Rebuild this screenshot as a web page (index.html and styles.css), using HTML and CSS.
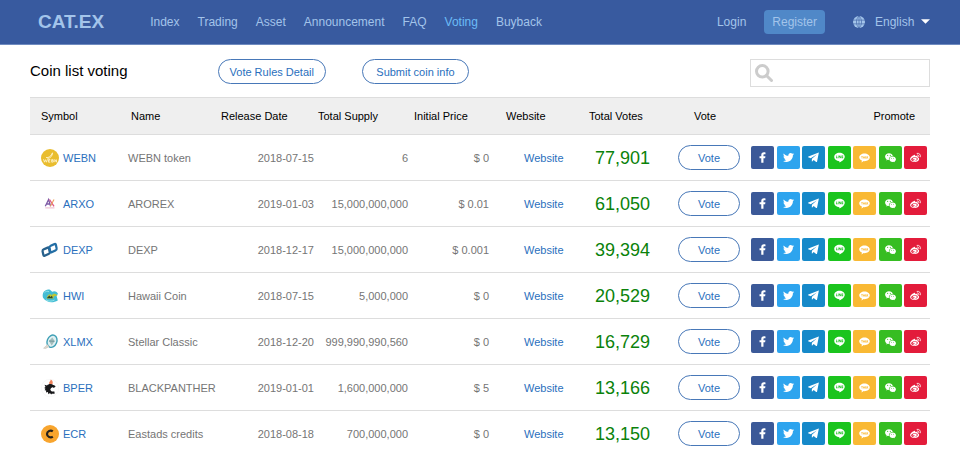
FILE: index.html
```
<!DOCTYPE html>
<html lang="en">
<head>
<meta charset="utf-8">
<title>CAT.EX - Coin list voting</title>
<link rel="stylesheet" href="styles.css">
</head>
<body>
<svg class="sprite" aria-hidden="true">
  <symbol id="i-facebook" viewBox="0 0 24 24"><path d="M9.300 23.500V13.800H5.500V9.500h3.800V6.800C9.300 2.900 11.600.7 15.100.7c1.600 0 3 .1 3.400.2V5H16.300c-1.800 0-2.200.9-2.200 2.200v2.300h4.300l-.7 4.300h-3.600v9.700z"/></symbol>
  <symbol id="i-twitter" viewBox="0 0 24 24"><path d="M23.954 4.569c-.885.389-1.83.654-2.825.775 1.014-.611 1.794-1.574 2.163-2.723-.951.555-2.005.959-3.127 1.184-.896-.959-2.173-1.559-3.591-1.559-2.717 0-4.92 2.203-4.92 4.917 0 .39.045.765.127 1.124C7.691 8.094 4.066 6.13 1.64 3.161c-.427.722-.666 1.561-.666 2.475 0 1.71.87 3.213 2.188 4.096-.807-.026-1.566-.248-2.228-.616v.061c0 2.385 1.693 4.374 3.946 4.827-.413.111-.849.171-1.296.171-.314 0-.615-.03-.916-.086.631 1.953 2.445 3.377 4.604 3.417-1.68 1.319-3.809 2.105-6.102 2.105-.39 0-.779-.023-1.17-.067 2.189 1.394 4.768 2.209 7.557 2.209 9.054 0 13.999-7.496 13.999-13.986 0-.209 0-.42-.015-.63.961-.689 1.8-1.56 2.46-2.548z"/></symbol>
  <symbol id="i-telegram" viewBox="0 0 24 24"><path d="M23.500 2.200 19.800 20.800c-.2 1.200-1 1.500-2 .9l-5.400-4.200-2.700 2.700c-.5.500-.8.700-1.400.3l.2-5.700L19 5.300 5.900 13.400.6 11.700c-1-.4-.9-1.200.3-1.700L22 1.500c1-.4 1.700-.1 1.500.7z"/></symbol>
  <symbol id="i-line" viewBox="0 0 24 24"><path fill-rule="evenodd" d="M12 1.500c6.400 0 11.500 4 11.500 9.100 0 2-.8 3.900-2.400 5.700-2.300 2.600-7.400 5.800-8.600 6.300-1.100.5-1 -.3-.9-.8l.2-1.800C5.400 19.900.5 15.800.5 10.600.5 5.500 5.600 1.500 12 1.500zM4.400 7.600v5.900h3.400v-1.300H5.700V7.600zm4.100 0v5.900h1.200V7.600zm2.200 0v5.900h1.200v-3.500l2.600 3.500h1.200V7.600h-1.200v3.500l-2.600-3.500zm6 0v5.900h3.400v-1.300H18v-1h2.100V9.900H18v-1h2.100V7.600z"/></symbol>
  <symbol id="i-kakao" viewBox="0 0 24 24"><path fill-rule="evenodd" d="M12 3c6.400 0 11.500 3.800 11.500 8.500S18.400 20 12 20l-1.700-.1L5.500 23l.9-4.200C2.900 17.400.5 14.600.5 11.500.5 6.800 5.600 3 12 3zM4.500 9v1.300h1.400V14h1.400v-3.700h1.400V9zm5.700 0-1.700 5h1.400l.3-.9h1.400l.3.900h1.400l-1.700-5zM13.600 9v5h2.500v-1.300h-1.200V9zm2.900 0v5h1.300v-1.500l1.300 1.500h1.500L18.700 11.400 20.400 9h-1.500l-1.100 1.700V9z"/></symbol>
  <symbol id="i-wechat" viewBox="0 0 24 24"><path fill-rule="evenodd" d="M8.700 2.500c4.300 0 7.800 2.700 8.400 6.200-5-.1-8.700 3.100-8.700 6.800 0 .7.100 1.300.3 1.900-1 0-1.900-.1-2.800-.4L2.800 18.700l.8-2.700C1.400 14.500.2 12.300.2 9.900.2 5.800 4 2.500 8.700 2.500zM5.800 6a1.300 1.300 0 1 0 0 2.600A1.300 1.300 0 0 0 5.800 6zm5.800 0a1.300 1.300 0 1 0 0 2.600 1.300 1.300 0 0 0 0-2.600z"/><path fill-rule="evenodd" d="M16.700 9.800c4 0 7.100 2.700 7.100 6 0 2-1.100 3.700-2.800 4.800l.6 2-2.400-1.200c-.8.200-1.600.4-2.500.4-4 0-7.100-2.700-7.100-6s3.200-6 7.100-6zm-2.500 3a1 1 0 1 0 0 2 1 1 0 0 0 0-2zm4.700 0a1 1 0 1 0 0 2 1 1 0 0 0 0-2z"/></symbol>
  <symbol id="i-weibo" viewBox="0 0 24 24"><path fill-rule="evenodd" d="M9.500 6.300c1.600-.4 2.200.9 1.600 2.800 2.400-1 5.300-1.300 5.600.7.100.7-.1 1.200-.3 1.800 2 .6 3.500 1.600 3.500 3.600 0 3.400-4.700 6.800-10 6.800-5 0-9.700-2.400-9.700-6.500C.2 11.700 5.700 7 9.500 6.300zM9.400 11.300c-4 .4-7 2.600-6.800 5.200.3 2.500 3.700 4 7.600 3.600 4-.4 7-2.600 6.800-5.200-.3-2.500-3.700-4-7.600-3.600z"/><path fill-rule="evenodd" d="M9.700 12.600c2.600-.6 5 .6 5 2.900 0 2.100-2 3.800-4.600 3.900-2.500.1-4.400-1.300-4.400-3.200 0-1.700 1.700-3.200 4-3.600zM8.400 15a1.500 1.500 0 1 0 0 3 1.500 1.500 0 0 0 0-3z"/><path fill="none" stroke="currentColor" stroke-width="1.800" stroke-linecap="round" d="M15.500 2.900c4.500-1 8.400 2.600 7.100 7.600M16.200 6.500c2.100-.4 3.700 1.200 3.100 3.300"/></symbol>
  <symbol id="c-webn" viewBox="0 0 18 18"><circle cx="9" cy="9" r="9" fill="#e9bd2e"/><path d="M5 8.500C8 9 10 7 11.500 3.800c0 3-2 5.400-5 5.700" fill="none" stroke="#fff5cf" stroke-width=".9"/><path d="m2.500 10.200 1 3 1-2.500 1 2.500 1-3M9.300 10.500H7.500v2.700h1.800M7.500 11.800h1.700M10.700 10.500v2.700h1c1.200 0 1.200-1.400 0-1.400h-1 1c1 0 1-1.300 0-1.300zM13.800 13.200v-2.700l1.700 2.700v-2.700" fill="none" stroke="#fff5cf" stroke-width=".8"/></symbol>
  <symbol id="c-arxo" viewBox="0 0 18 18"><path d="M4.300 11.300 7.600 4.500l2 6.800M5.500 9h3.500" fill="none" stroke="#7d5aa5" stroke-width="1.300"/><path d="m8.500 4.500 4.500 6.800" stroke="#dd568b" stroke-width="1.300"/><path d="M13 4.500 9.400 11.300" stroke="#efa15a" stroke-width="1.100"/><path d="M4.300 12.900h9.200" stroke="#e8a5bd" stroke-width=".8"/></symbol>
  <symbol id="c-dexp" viewBox="0 0 18 18"><g fill="none" stroke-width="2.300"><rect x="1.900" y="7.500" width="7" height="6.200" rx="1.400" transform="rotate(-24 5.400 10.600) skewX(-12) translate(2 0)" stroke="#28618c"/><rect x="9" y="3.800" width="7" height="6.200" rx="1.400" transform="rotate(-24 12.500 6.900) skewX(-12) translate(1 0)" stroke="#236ea5"/></g></symbol>
  <symbol id="c-hwi" viewBox="0 0 18 18"><path d="M2 10.800C.5 5.500 4.500 1.600 9 2.800l2.200 2c2-1.400 5.300-.3 5.800 2.200l-1.500 1.600 1.300 4.800C12 16.300 5.500 16 2 10.800z" fill="#43bcd4"/><path d="M6.300 9.500c1.200-3 3.800-2.700 4.500-1.200 1.500-2.200 4.500-1.800 5.700.7-2.500-.7-3.800-.3-4.200 2.500H5.500z" fill="#bfc534"/><path d="m6.500 10.300 2-1.800.7 1.500 1.800-1.300.8 2.600H6z" fill="#2d4930"/><path d="M3.500 5.800c1.300-1.800 3.300-2 4.500-1M5 12.800c2.300 1.700 5.500 1.700 8.500.3" fill="none" stroke="#9be6ea" stroke-width=".9"/></symbol>
  <symbol id="c-xlmx" viewBox="0 0 18 18"><ellipse cx="11" cy="8.200" rx="4.800" ry="6.300" transform="rotate(22 11 8.200)" fill="#dff0f2" stroke="#3e9fb5" stroke-width="1.400"/><path d="m8 8 3.300-3.500L13.700 8l-3 4.500z" fill="#a3bcbc"/><path d="m8 8 5.500.3" stroke="#5a858b" stroke-width=".7"/><path d="m6.600 11.500-4 3.700 2 .3 3.500-2" fill="#ded8ce" stroke="#c5c1ba" stroke-width=".6"/></symbol>
  <symbol id="c-bper" viewBox="0 0 18 18"><circle cx="9" cy="9" r="8.700" fill="#fff" stroke="#f0f0f0" stroke-width=".5"/><path d="M8.300 5C7.500 3 9.600 2.600 9.700.6c2.400 1.300 2.600 3.400 1.400 4.900z" fill="#ee815b"/><path d="M13.800 8.200C12 6.300 8.800 7 8.200 9.500c-.6 3 2.200 4.700 5.300 3.900" fill="none" stroke="#171719" stroke-width="2.400"/><path d="M12.800 6.400C10.500 4.500 7.500 4.800 6 6.600L3.500 5.800l1 2.100-1.300 1 1.300.9-.9 1.500 1.600.3-.2 1.900 1.900-.4.500 2.100 1.600-1.100 1.200 1.400.9-1.300L8 11z" fill="#171719"/></symbol>
  <symbol id="c-ecr" viewBox="0 0 18 18"><circle cx="9" cy="9" r="9" fill="#f8a52e"/><path d="M11.800 6.300C9.600 4.600 6 6 6 9s3.600 4.400 5.800 2.700" fill="none" stroke="#26211c" stroke-width="2.200"/></symbol>
</svg>

<header class="topbar">
  <a class="brand" href="#">CAT.EX</a>
  <nav class="menu">
    <a href="#">Index</a>
    <a href="#">Trading</a>
    <a href="#">Asset</a>
    <a href="#">Announcement</a>
    <a href="#">FAQ</a>
    <a class="active" href="#" aria-current="page">Voting</a>
    <a href="#">Buyback</a>
  </nav>
  <div class="account">
    <a href="#">Login</a>
    <a class="register" href="#">Register</a>
    <label class="language" aria-label="Language">
      <svg class="globe" viewBox="0 0 16 16" aria-hidden="true"><circle cx="8" cy="8" r="8" fill="currentColor"/><path d="M8 0v16M0 5.500h16M0 10.500h16M8 0C3.500 4 3.500 12 8 16M8 0c4.500 4 4.500 12 0 16" fill="none" stroke="#385a9f" stroke-width=".8"/></svg>
      <select><option>English</option></select>
      <svg class="caret" viewBox="0 0 10 5" aria-hidden="true"><path d="M0 0h10L5 5z" fill="#fff"/></svg>
    </label>
  </div>
</header>

<main class="page">
  <div class="toolbar">
    <h1>Coin list voting</h1>
    <div class="actions">
      <button class="pill" type="button">Vote Rules Detail</button>
      <button class="pill" type="button">Submit coin info</button>
    </div>
    <label class="search" aria-label="Search coins">
      <svg viewBox="0 0 18 18" aria-hidden="true"><circle cx="7.300" cy="7.300" r="5.800" fill="none" stroke="#ccc" stroke-width="3"/><path d="m11.500 11.500 5 5" stroke="#ccc" stroke-width="3" stroke-linecap="round"/></svg>
      <input type="text">
    </label>
  </div>

  <table class="coins">
    <colgroup>
      <col class="w-symbol"><col class="w-name"><col class="w-date"><col class="w-supply"><col class="w-price"><col class="w-site"><col class="w-total"><col class="w-vote"><col class="w-promote">
    </colgroup>
    <thead>
      <tr>
        <th class="symbol">Symbol</th>
        <th class="name">Name</th>
        <th class="date">Release Date</th>
        <th class="supply">Total Supply</th>
        <th class="price">Initial Price</th>
        <th class="site">Website</th>
        <th class="total">Total Votes</th>
        <th class="vote">Vote</th>
        <th class="promote">Promote</th>
      </tr>
    </thead>
    <tbody id="coin-rows"></tbody>
  </table>
</main>
<script src="app.js"></script>
</body>
</html>
```
FILE: app.js
```
const coins = [
  ["WEBN", "WEBN token", "2018-07-15", "6", "0", "77,901"],
  ["ARXO", "AROREX", "2019-01-03", "15,000,000,000", "0.01", "61,050"],
  ["DEXP", "DEXP", "2018-12-17", "15,000,000,000", "0.001", "39,394"],
  ["HWI", "Hawaii Coin", "2018-07-15", "5,000,000", "0", "20,529"],
  ["XLMX", "Stellar Classic", "2018-12-20", "999,990,990,560", "0", "16,729"],
  ["BPER", "BLACKPANTHER", "2019-01-01", "1,600,000,000", "5", "13,166"],
  ["ECR", "Eastads credits", "2018-08-18", "700,000,000", "0", "13,150"]
];
const networks = ["facebook", "twitter", "telegram", "line", "kakao", "wechat", "weibo"];

const shareLinks = networks.map(n =>
  `<a class="share ${n}" href="#" aria-label="${n}"><svg aria-hidden="true"><use href="#i-${n}"/></svg></a>`
).join("");

document.getElementById("coin-rows").innerHTML = coins.map(([symbol, name, date, supply, price, votes]) => `
  <tr>
    <td class="symbol"><a class="coin" href="#"><svg aria-hidden="true"><use href="#c-${symbol.toLowerCase()}"/></svg>${symbol}</a></td>
    <td class="name">${name}</td>
    <td class="date">${date}</td>
    <td class="supply">${supply}</td>
    <td class="price">$ ${price}</td>
    <td class="site"><a href="#">Website</a></td>
    <td class="total">${votes}</td>
    <td class="vote"><button class="pill" type="button">Vote</button></td>
    <td class="promote"><div class="shares">${shareLinks}</div></td>
  </tr>`).join("");
```
FILE: styles.css
```
* { box-sizing: border-box; }

body {
  margin: 0;
  background: #fff;
  color: #000;
  font: 11px/16px "Liberation Sans", Arial, sans-serif;
}

a { color: #2a6fbd; text-decoration: none; }
svg { display: block; }
.sprite { position: absolute; width: 0; height: 0; }

/* Top bar */
.topbar {
  display: flex;
  align-items: center;
  height: 45px;
  padding: 0 30px 1px 38px;
  border-bottom: 1px solid #6f8bc0;
  background: #385a9f;
  color: #a3c4ea;
  font-size: 12px;
}
.topbar a { color: inherit; }
.topbar .brand { font-size: 19px; font-weight: bold; line-height: 24px; }
.menu { display: flex; gap: 18px; margin-left: 46px; }
.topbar .menu .active { color: #6bbcf7; }
.account { display: flex; align-items: center; gap: 18px; margin-left: auto; }
.topbar .register {
  padding: 4px 8px;
  border-radius: 4px;
  background: #5088c8;
}
.language { display: flex; align-items: center; margin-left: 10px; }
.globe { width: 12px; height: 12px; margin-right: 10px; }
.caret { width: 9px; height: 5px; margin-left: 6px; }
.language select {
  padding: 0;
  border: 0;
  background: none;
  color: inherit;
  font: inherit;
  appearance: none;
}

/* Title, actions and search */
.page { padding: 0 30px; }
.toolbar {
  display: flex;
  align-items: flex-start;
  padding: 14px 0 10px;
}
.toolbar h1 { margin: 0; font-size: 15px; font-weight: normal; line-height: 24px; }
.actions { display: flex; gap: 36px; margin-left: 90px; }
.pill {
  height: 25px;
  padding: 0 11px;
  border: 1px solid #4878b8;
  border-radius: 13px;
  background: #fff;
  color: #2a6fbd;
  font: inherit;
}
.actions .pill { min-width: 107px; }
.search {
  display: flex;
  align-items: center;
  width: 20%;
  height: 28px;
  margin-left: auto;
  padding: 0 4px;
  border: 1px solid #ddd;
}
.search svg { flex: none; width: 18px; height: 18px; }
.search input {
  flex: 1;
  min-width: 0;
  border: 0;
  outline: 0;
  background: none;
  font: inherit;
}

/* Coin table */
.coins {
  width: 100%;
  border-collapse: separate;
  border-spacing: 0;
  table-layout: fixed;
}
.w-symbol { width: 90px; }
.w-name { width: 93px; }
.w-date { width: 105px; }
.w-supply { width: 94px; }
.w-price { width: 81px; }
.w-site { width: 88px; }
.w-total { width: 89px; }
.w-vote { width: 77px; }
.w-promote { width: 183px; }

th {
  height: 38px;
  padding: 0;
  border-top: 1px solid #ddd;
  border-bottom: 1px solid #ddd;
  background: #efefef;
  font-weight: normal;
  text-align: left;
  white-space: nowrap;
}
td {
  height: 46px;
  padding: 0;
  border-bottom: 1px solid #ddd;
  color: #757575;
  white-space: nowrap;
}
th.symbol, th.name { padding-left: 11px; }
th.date, th.total { padding-left: 8px; }
th.price { padding-left: 2px; }
th.site { padding-left: 13px; }
th.vote { padding-left: 24px; }
th.promote { padding-right: 15px; text-align: right; }

td.symbol { padding-left: 11px; }
td.name, td.vote { padding-left: 8px; }
td.date, td.supply, td.price { padding-right: 4px; text-align: right; }
td.site { padding-left: 31px; }
td.total { padding-left: 14px; color: #0a820a; font-size: 18px; }
td.promote { padding: 0 3px 0 4px; }
td .pill { width: 62px; }

.coin { display: flex; align-items: center; gap: 4px; }
.coin svg { width: 18px; height: 18px; }

.shares { display: flex; justify-content: space-between; }
.share {
  display: grid;
  place-items: center;
  width: 23px;
  height: 23px;
  border-radius: 2px;
  color: #fff;
}
.share svg { width: 11px; height: 11px; fill: currentColor; }
.facebook { background: #3b5998; }
.twitter { background: #2da4ee; }
.telegram { background: #1689c9; }
.line { background: #1bc41e; }
.kakao { background: #f9b934; }
.wechat { background: #36bd22; }
.weibo { background: #e31c3b; }
```
